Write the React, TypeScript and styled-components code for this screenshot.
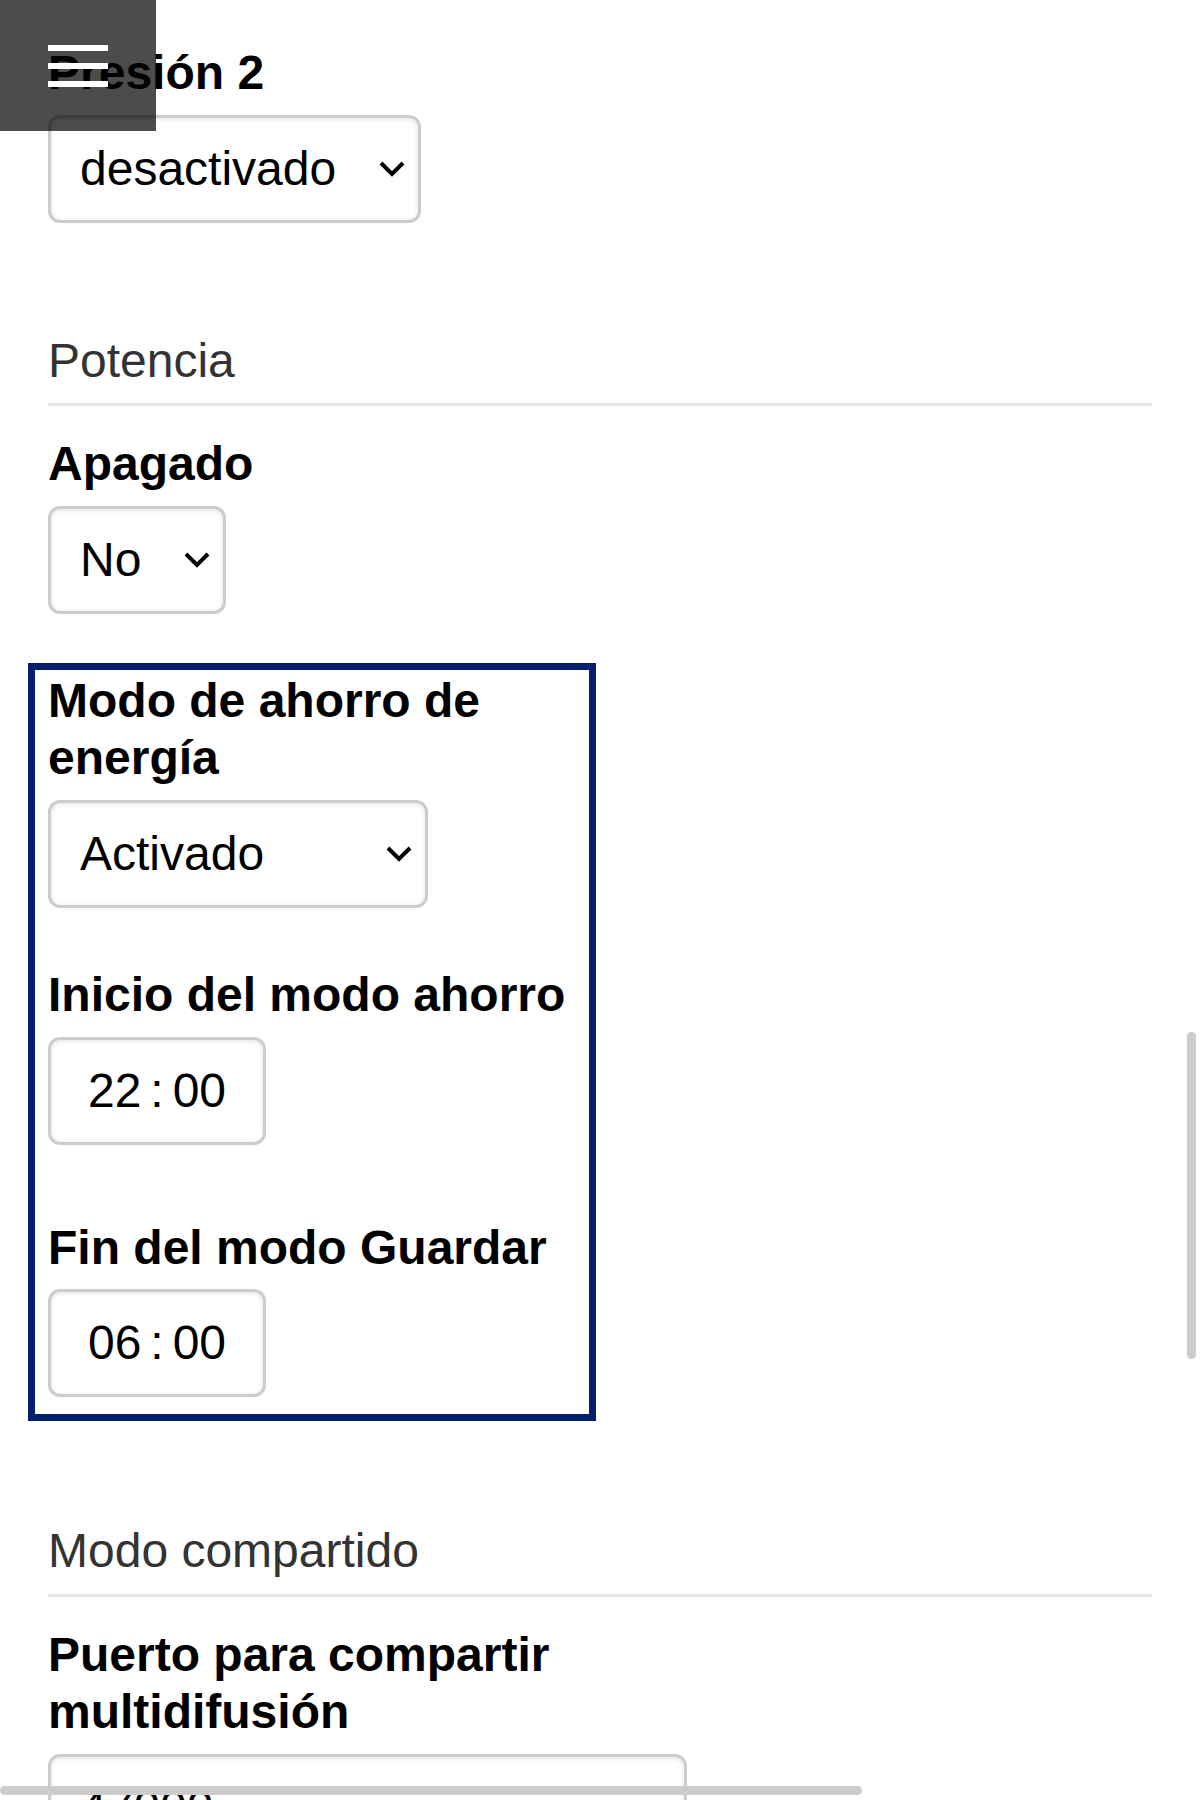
import React from 'react';
import styled, { createGlobalStyle } from 'styled-components';

const GlobalStyle = createGlobalStyle`
  html, body {
    margin: 0;
    padding: 0;
    overflow: hidden;
    background: #ffffff;
  }

  body {
    font-family: "Liberation Sans", Arial, sans-serif;
    color: #000000;
  }
`;

const Page = styled.main`
  padding: 44px 48px 0;
`;

const Field = styled.div<{ $top?: number }>`
  margin-top: ${({ $top }) => $top ?? 0}px;
`;

const Label = styled.label`
  display: block;
  max-width: 560px;
  margin-bottom: 13px;
  font-size: 48px;
  font-weight: 700;
  line-height: 57.6px;
`;

const SectionTitle = styled.h2<{ $top: number }>`
  margin: ${({ $top }) => $top}px 0 0;
  font-size: 48px;
  font-weight: 400;
  line-height: 57.6px;
  color: #333333;
`;

const Rule = styled.hr`
  margin: 14px 0 0;
  height: 3px;
  border: 0;
  background: #e6e6e6;
`;

const Highlight = styled.div`
  box-sizing: border-box;
  width: 568px;
  margin: 49px 0 0 -20px;
  padding: 2px 14px 17px 13px;
  border: 7px solid #02216a;
`;

const SelectWrap = styled.div<{ $width: number }>`
  position: relative;
  width: ${({ $width }) => $width}px;
  height: 108px;
`;

const boxLook = `
  box-sizing: border-box;
  height: 108px;
  margin: 0;
  border: 3px solid #cccccc;
  border-radius: 12px;
  background: #ffffff;
  box-shadow: inset 0 1px 5px rgba(0, 0, 0, 0.12);
  font-family: "Liberation Sans", Arial, sans-serif;
  font-size: 48px;
  color: #000000;
  outline: none;
`;

const Select = styled.select`
  ${boxLook}
  appearance: none;
  width: 100%;
  padding: 0 0 0 29px;
`;

const Chevron = styled.svg`
  position: absolute;
  top: 50%;
  right: 16px;
  transform: translateY(-50%);
  pointer-events: none;
`;

const TimeBox = styled.div`
  ${boxLook}
  display: flex;
  align-items: center;
  justify-content: center;
  width: 218px;
  line-height: 1;
`;

const TimeSep = styled.span`
  margin: 0 9px;
`;

const TextInput = styled.input`
  ${boxLook}
  display: block;
  width: 639px;
  padding: 0 0 0 29px;
`;

const MenuButton = styled.button`
  position: fixed;
  top: 0;
  left: 0;
  display: flex;
  flex-direction: column;
  gap: 12px;
  box-sizing: border-box;
  width: 156px;
  height: 131px;
  padding: 45px 0 0 48px;
  border: 0;
  background: rgba(0, 0, 0, 0.7);
  cursor: pointer;
`;

const MenuBar = styled.span`
  display: block;
  width: 60px;
  height: 6px;
  background: #ffffff;
`;

const ScrollThumb = styled.div<{ $vertical?: boolean }>`
  position: fixed;
  border-radius: 5px;
  background: #cccccc;
  ${({ $vertical }) =>
    $vertical
      ? 'top: 1032px; left: 1187px; width: 9px; height: 327px;'
      : 'top: 1786px; left: 0; width: 862px; height: 9px;'}
`;

type Option = { value: string; label: string };

const DropDown: React.FC<{ width: number; value: string; options: Option[] }> = ({ width, value, options }) => (
  <SelectWrap $width={width}>
    <Select defaultValue={value}>
      {options.map((o) => (
        <option key={o.value} value={o.value}>
          {o.label}
        </option>
      ))}
    </Select>
    <Chevron width="26" height="16" viewBox="0 0 26 16">
      <polyline points="2,2 13,13 24,2" fill="none" stroke="#000" strokeWidth="4" />
    </Chevron>
  </SelectWrap>
);

const TimeField: React.FC<{ hours: string; minutes: string }> = ({ hours, minutes }) => (
  <TimeBox>
    <span>{hours}</span>
    <TimeSep>:</TimeSep>
    <span>{minutes}</span>
  </TimeBox>
);

const onOff: Option[] = [
  { value: 'on', label: 'Activado' },
  { value: 'off', label: 'Desactivado' },
];

const App: React.FC = () => {
  return (
    <>
      <GlobalStyle />
      <Page>
        <Field>
          <Label>Presión 2</Label>
          <DropDown
            width={373}
            value="off"
            options={[
              { value: 'on', label: 'activado' },
              { value: 'off', label: 'desactivado' },
            ]}
          />
        </Field>

        <SectionTitle $top={109}>Potencia</SectionTitle>
        <Rule />

        <Field $top={29}>
          <Label>Apagado</Label>
          <DropDown
            width={178}
            value="no"
            options={[
              { value: 'no', label: 'No' },
              { value: 'si', label: 'Sí' },
            ]}
          />
        </Field>

        <Highlight>
          <Field>
            <Label>Modo de ahorro de energía</Label>
            <DropDown width={380} value="on" options={onOff} />
          </Field>

          <Field $top={58}>
            <Label>Inicio del modo ahorro</Label>
            <TimeField hours="22" minutes="00" />
          </Field>

          <Field $top={74}>
            <Label>Fin del modo Guardar</Label>
            <TimeField hours="06" minutes="00" />
          </Field>
        </Highlight>

        <SectionTitle $top={101}>Modo compartido</SectionTitle>
        <Rule />

        <Field $top={29}>
          <Label>Puerto para compartir multidifusión</Label>
          <TextInput defaultValue="47000" />
        </Field>
      </Page>

      <MenuButton aria-label="Menú">
        <MenuBar />
        <MenuBar />
        <MenuBar />
      </MenuButton>

      <ScrollThumb $vertical />
      <ScrollThumb />
    </>
  );
};

export default App;
